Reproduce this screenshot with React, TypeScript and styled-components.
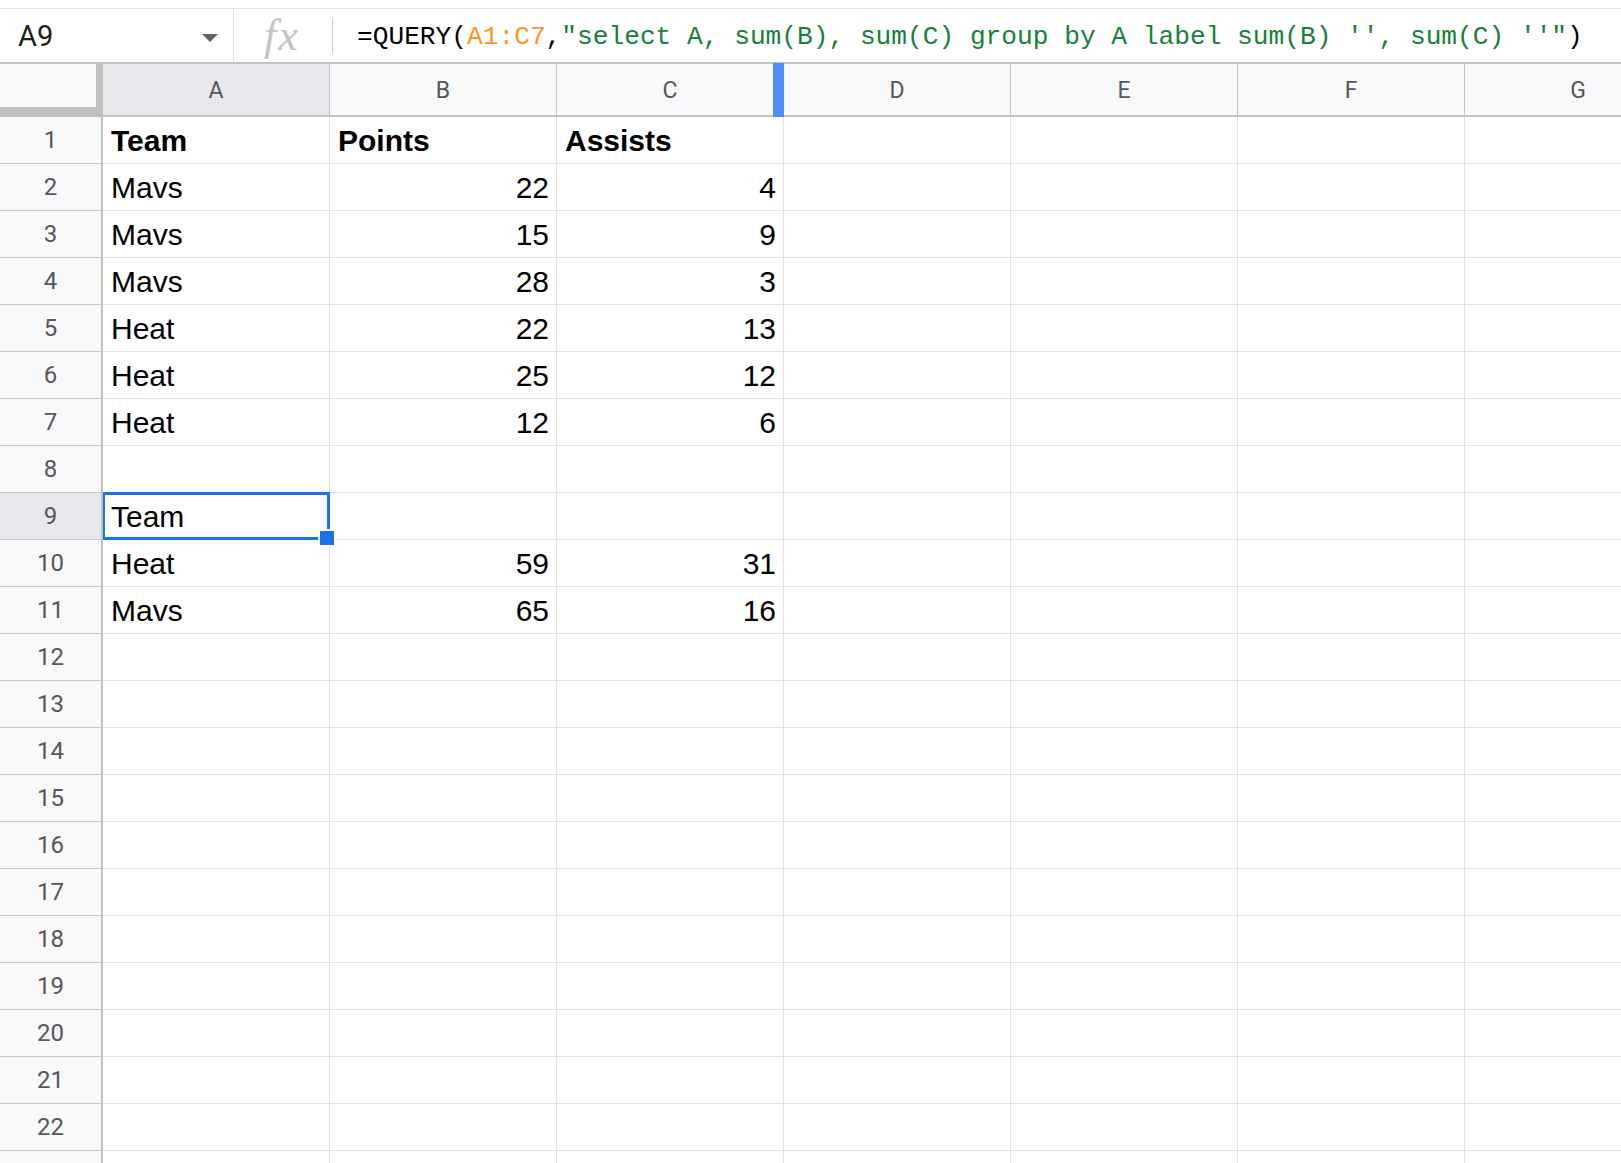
import React from 'react';
import styled, {createGlobalStyle} from 'styled-components';

const GlobalStyle = createGlobalStyle`
  html, body {
    margin: 0;
    padding: 0;
    background: #fff;
  }
  * {
    box-sizing: border-box;
  }
`;

const Page = styled.div`
  width: 1621px;
  height: 1163px;
  overflow: hidden;
  background: #fff;
`;

const TopStrip = styled.div`
  height: 9px;
  border-bottom: 1px solid #e3e3e3;
`;

const FormulaBar = styled.div`
  display: flex;
  align-items: center;

  height: 55px;
  border-bottom: 2px solid #c4c4c4;
`;

const NameBox = styled.div`
  display: flex;
  align-items: center;

  width: 233px;
  height: 100%;
  padding-left: 18px;
  padding-right: 15px;

  font-family: Roboto, "Liberation Sans", sans-serif;
  font-size: 29px;
  color: #1f1f1f;
`;

const DropArrow = styled.span`
  margin-left: auto;
  margin-top: 4px;

  width: 0;
  height: 0;

  border-left: 8px solid transparent;
  border-right: 8px solid transparent;
  border-top: 8px solid #5f6368;
`;

const Divider = styled.div<{$short?: boolean}>`
  width: 1px;
  height: ${p => p.$short ? '36px' : '100%'};

  background: ${p => p.$short ? '#c8c8c8' : '#e3e3e3'};
`;

const FxLabel = styled.div`
  width: 98px;
  padding-left: 30px;

  font-family: "Liberation Serif", serif;
  font-style: italic;
  font-size: 44px;
  letter-spacing: 2px;
  color: #c4c4c4;
`;

const Formula = styled.div`
  padding-left: 24px;
  margin-top: 3px;

  font-family: "Liberation Mono", monospace;
  font-size: 26.2px;
  white-space: pre;
  color: #000;
`;

const Tok = styled.span<{$c?: string}>`
  color: ${p => p.$c || '#000'};
`;

const Grid = styled.div`
  display: grid;
  grid-template-columns: 103px repeat(7, 227px);
  grid-template-rows: 53px;
  grid-auto-rows: 47px;
`;

const Corner = styled.div`
  background: #f8f9fa;
  border-right: 7px solid #bfbfbf;
  border-bottom: 10px solid #bfbfbf;
`;

const ColHeader = styled.div<{$active?: boolean; $resize?: boolean}>`
  position: relative;
  display: flex;
  justify-content: center;
  align-items: center;

  padding-top: 2px;

  background: ${p => p.$active ? '#e6e8eb' : '#f8f9fa'};
  border-right: 1px solid #c4c4c4;
  border-bottom: 2px solid #c4c4c4;

  font-family: Roboto, "Liberation Sans", sans-serif;
  font-size: 23px;
  color: #575757;

  ${p => p.$resize && `
    &::after {
      content: '';
      position: absolute;
      top: -1px;
      right: -1px;
      bottom: -2px;
      width: 11px;
      background: #4f8df7;
    }
  `}
`;

const RowHeader = styled.div<{$active?: boolean}>`
  display: flex;
  justify-content: center;
  align-items: center;

  padding-bottom: 1px;

  background: ${p => p.$active ? '#e6e8eb' : '#f8f9fa'};
  border-right: 2px solid #c0c0c0;
  border-bottom: 1px solid #c8c8c8;

  font-family: Roboto, "Liberation Sans", sans-serif;
  font-size: 24px;
  color: #575757;
`;

const Cell = styled.div<{$num?: boolean; $bold?: boolean; $selected?: boolean}>`
  position: relative;
  display: flex;
  align-items: flex-end;
  justify-content: ${p => p.$num ? 'flex-end' : 'flex-start'};

  padding: 0 7px 5px 8px;

  border-right: 1px solid #e0e1e1;
  border-bottom: 1px solid #e0e1e1;

  font-family: "Liberation Sans", Arial, sans-serif;
  font-size: 30px;
  font-weight: ${p => p.$bold ? 700 : 400};
  color: #000;
  white-space: nowrap;

  ${p => p.$selected && `
    &::before {
      content: '';
      position: absolute;
      top: -1px;
      left: 0;
      right: -1px;
      bottom: -1px;
      border: 3px solid #1a73e8;
      border-left-width: 2px;
      z-index: 2;
    }
    &::after {
      content: '';
      position: absolute;
      right: -7px;
      bottom: -8px;
      width: 14px;
      height: 14px;
      background: #1a73e8;
      border: 2px solid #fff;
      z-index: 3;
    }
  `}
`;

const columns = ['A', 'B', 'C', 'D', 'E', 'F', 'G'];

const data: (string | number | null)[][] = [
  ['Team', 'Points', 'Assists'],
  ['Mavs', 22, 4],
  ['Mavs', 15, 9],
  ['Mavs', 28, 3],
  ['Heat', 22, 13],
  ['Heat', 25, 12],
  ['Heat', 12, 6],
  [],
  ['Team'],
  ['Heat', 59, 31],
  ['Mavs', 65, 16],
];

const ROW_COUNT = 22;
const SELECTED = {row: 9, col: 0};

export default function App() {
    const rows = Array.from({length: ROW_COUNT}, (_, i) => data[i] || []);

    return (
        <Page>
            <GlobalStyle/>
            <TopStrip/>
            <FormulaBar>
                <NameBox>
                    A9
                    <DropArrow/>
                </NameBox>
                <Divider/>
                <FxLabel>fx</FxLabel>
                <Divider $short/>
                <Formula>
                    <Tok>=QUERY(</Tok>
                    <Tok $c="#f7981d">A1:C7</Tok>
                    <Tok>,</Tok>
                    <Tok $c="#188038">"select A, sum(B), sum(C) group by A label sum(B) '', sum(C) ''"</Tok>
                    <Tok>)</Tok>
                </Formula>
            </FormulaBar>
            <Grid>
                <Corner/>
                {columns.map((c, i) =>
                    <ColHeader key={c} $active={i === SELECTED.col} $resize={c === 'C'}>{c}</ColHeader>)}
                {rows.map((row, r) => {
                    const rowNum = r + 1;
                    return (
                        <React.Fragment key={r}>
                            <RowHeader $active={rowNum === SELECTED.row}>{rowNum}</RowHeader>
                            {columns.map((c, j) => {
                                const v = row[j];
                                return (
                                    <Cell
                                        key={c}
                                        $num={typeof v === 'number'}
                                        $bold={rowNum === 1}
                                        $selected={rowNum === SELECTED.row && j === SELECTED.col}
                                    >
                                        {v ?? ''}
                                    </Cell>
                                );
                            })}
                        </React.Fragment>
                    );
                })}
                {/* next row peeks in under the fold, its number is off-screen */}
                <RowHeader/>
                {columns.map(c => <Cell key={c}/>)}
            </Grid>
        </Page>
    );
}
